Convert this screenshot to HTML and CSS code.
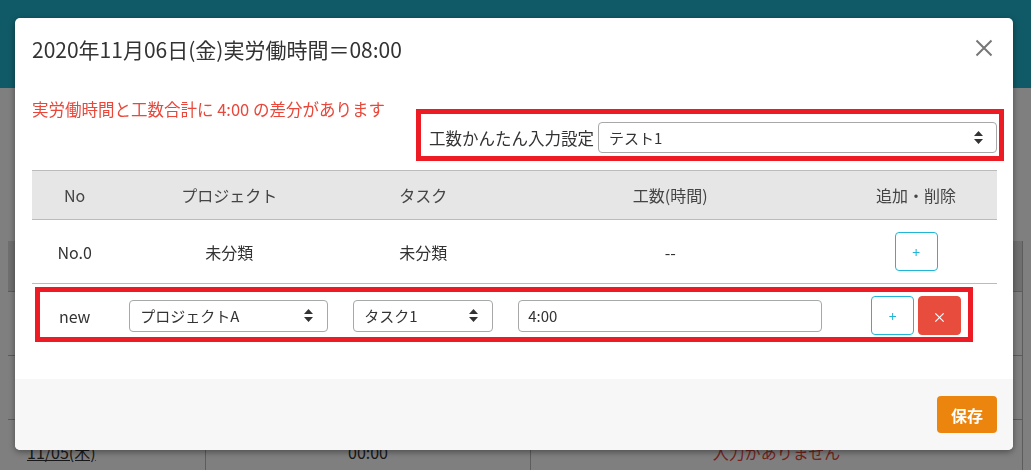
FILE: index.html
```html
<!DOCTYPE html>
<html lang="ja">
<head>
    <meta charset="UTF-8">
    <meta name="viewport" content="width=device-width, initial-scale=1.0">
    <title>工数入力</title>
    <link rel="stylesheet" href="styles.css">
</head>
<body>
    <div class="page">
        <div class="navbar"></div>
        <table class="list">
            <thead>
                <tr><th>日付</th><th>実労働時間</th><th>工数</th></tr>
            </thead>
            <tbody>
                <tr><td><a href="#">11/03(火)</a></td><td>00:00</td><td class="warn">入力がありません</td></tr>
                <tr><td><a href="#">11/04(水)</a></td><td>08:00</td><td>08:00</td></tr>
                <tr><td><a href="#">11/05(木)</a></td><td>00:00</td><td class="warn">入力がありません</td></tr>
            </tbody>
        </table>
    </div>

    <div class="backdrop"></div>

    <div class="modal">
        <div class="modal-header">
            <h4 class="modal-title">2020年11月06日(金)実労働時間＝08:00</h4>
            <button class="close" type="button">
                <svg width="18" height="18" viewBox="0 0 18 18"><path d="M1.5 1.5 L16.5 16.5 M16.5 1.5 L1.5 16.5" stroke="#777" stroke-width="2" fill="none"/></svg>
            </button>
        </div>
        <div class="modal-body">
            <div class="notice-row">
                <p class="diff-msg">実労働時間と工数合計に 4:00 の差分があります</p>
                <div class="quick-setting">
                    <label>工数かんたん入力設定</label>
                    <div class="select-wrap setting-select">
                        <select><option>テスト1</option></select>
                        <svg class="updown" width="9" height="13" viewBox="0 0 9 13"><path d="M4.5 0 L9 5 H0 Z M4.5 13 L0 8 H9 Z" fill="#333"/></svg>
                    </div>
                </div>
            </div>

            <div class="table-wrap">
                <table class="kosu">
                    <thead>
                        <tr>
                            <th class="col-no">No</th>
                            <th class="col-project">プロジェクト</th>
                            <th class="col-task">タスク</th>
                            <th class="col-time">工数(時間)</th>
                            <th class="col-action">追加・削除</th>
                        </tr>
                    </thead>
                    <tbody>
                        <tr class="row-line">
                            <td>No.0</td>
                            <td>未分類</td>
                            <td>未分類</td>
                            <td>--</td>
                            <td><button class="btn-add" type="button">+</button></td>
                        </tr>
                        <tr>
                            <td>new</td>
                            <td>
                                <div class="select-wrap project-select">
                                    <select><option>プロジェクトA</option></select>
                                    <svg class="updown" width="9" height="13" viewBox="0 0 9 13"><path d="M4.5 0 L9 5 H0 Z M4.5 13 L0 8 H9 Z" fill="#333"/></svg>
                                </div>
                            </td>
                            <td>
                                <div class="select-wrap task-select">
                                    <select><option>タスク1</option></select>
                                    <svg class="updown" width="9" height="13" viewBox="0 0 9 13"><path d="M4.5 0 L9 5 H0 Z M4.5 13 L0 8 H9 Z" fill="#333"/></svg>
                                </div>
                            </td>
                            <td><input class="time-input" type="text" value="4:00"></td>
                            <td>
                                <div class="btn-group">
                                    <button class="btn-add" type="button">+</button>
                                    <button class="btn-del" type="button">×</button>
                                </div>
                            </td>
                        </tr>
                    </tbody>
                </table>
                <div class="row-mark"></div>
            </div>
        </div>
        <div class="modal-footer">
            <button class="btn-save" type="button">保存</button>
        </div>
    </div>
</body>
</html>
```

FILE: styles.css
```css
body {
    margin: 0;
    font-family: "Noto Sans CJK JP", "Noto Sans", sans-serif;
    color: #333;
}

/* page behind the dialog */
.navbar {
    height: 88px;
    background-color: #21b5cf;
}

.list {
    margin: 153px 8px 0;
    width: 1015px;
    border-collapse: collapse;
    border-right: 1px solid #b8b8b8;
    font-size: 16px;
}

.list th {
    height: 48px;
    background-color: #dedede;
    font-weight: normal;
}

.list td {
    height: 63px;
    padding: 0 19px;
    border-top: 1px solid #b8b8b8;
    text-align: center;
}

.list td:first-child {
    width: 159px;
    text-align: left;
}

.list td:nth-child(2) {
    width: 286px;
    border-left: 1px solid #b8b8b8;
    border-right: 1px solid #b8b8b8;
}

.list a {
    color: #333;
}

.list .warn {
    color: #e8473a;
}

.backdrop {
    position: fixed;
    inset: 0;
    background-color: rgba(0, 0, 0, 0.5);
}

/* dialog */
.modal {
    position: fixed;
    left: 15px;
    top: 18px;
    width: 998px;
    height: 432px;
    background-color: #fff;
    border-radius: 5px;
    box-shadow: 0 2px 6px rgba(0, 0, 0, 0.4);
    display: flex;
    flex-direction: column;
}

.modal-header {
    display: flex;
    justify-content: space-between;
    align-items: flex-start;
    padding: 16px 20px 0 17px;
}

.modal-title {
    margin: 0;
    font-size: 21px;
    font-weight: normal;
    line-height: 31px;
    color: #333;
}

.close {
    border: none;
    background: none;
    padding: 0;
    margin-top: 5px;
    cursor: pointer;
}

.close svg {
    display: block;
}

.modal-body {
    flex: 1;
    padding: 0 16px 0 17px;
}

.notice-row {
    display: flex;
    justify-content: space-between;
    align-items: flex-start;
    margin-top: 32px;
}

.diff-msg {
    margin: 0;
    color: #e8473a;
    font-size: 16.5px;
    line-height: 24px;
}

.quick-setting {
    position: relative;
    display: flex;
    align-items: center;
    gap: 4px;
    margin-top: 25px;
    font-size: 16.5px;
}

.quick-setting::after {
    content: "";
    position: absolute;
    top: -13px;
    left: -13px;
    right: -7px;
    bottom: -8px;
    border: 5px solid #ed1c24;
}

.select-wrap {
    position: relative;
    height: 32px;
}

.select-wrap select {
    appearance: none;
    width: 100%;
    height: 100%;
    border: 1px solid #a8a8a8;
    border-radius: 4px;
    background-color: #fff;
    padding: 0 10px;
    font-family: inherit;
    font-size: 15px;
    color: #333;
}

.select-wrap .updown {
    position: absolute;
    right: 15px;
    top: 9px;
}

.setting-select {
    width: 399px;
    height: 31px;
}

.setting-select .updown {
    right: 14px;
}

.project-select {
    width: 199px;
}

.task-select {
    width: 140px;
}

.table-wrap {
    position: relative;
    margin-top: 17px;
}

.kosu {
    width: 100%;
    border-collapse: collapse;
    font-size: 16px;
}

.kosu th {
    height: 48px;
    padding: 0;
    background-color: #e6e6e6;
    border-top: 1px solid #bbb;
    border-bottom: 1px solid #bbb;
    font-weight: normal;
    color: #444;
}

.col-no { width: 86px; }
.col-project { width: 224px; }
.col-task { width: 162px; }
.col-time { width: 330px; }
.col-action { width: 163px; }

.kosu td {
    padding: 12px;
    text-align: center;
}

.row-line td {
    border-bottom: 1px solid #bbb;
}

.time-input {
    box-sizing: border-box;
    width: 304px;
    height: 32px;
    border: 1px solid #a8a8a8;
    border-radius: 4px;
    padding: 0 9px;
    font-family: inherit;
    font-size: 15px;
    color: #333;
}

.btn-group {
    display: flex;
    justify-content: center;
    gap: 4px;
}

.btn-add,
.btn-del {
    width: 43px;
    height: 39px;
    border-radius: 4px;
    font-family: inherit;
    font-size: 14px;
    padding: 0;
}

.btn-add {
    border: 1px solid #1fb6d8;
    background-color: #fff;
    color: #1fb6d8;
}

.btn-del {
    border: 1px solid #e74c3c;
    background-color: #e74c3c;
    color: #fff;
}

.row-mark {
    position: absolute;
    left: 3px;
    top: 117px;
    width: 938px;
    height: 55px;
    box-sizing: border-box;
    border: 5px solid #ed1c24;
}

.modal-footer {
    display: flex;
    justify-content: flex-end;
    padding: 17px 16px;
    background-color: #f7f7f7;
    border-radius: 0 0 5px 5px;
}

.btn-save {
    width: 60px;
    height: 37px;
    border: none;
    border-radius: 4px;
    background-color: #ec850e;
    color: #fff;
    font-family: inherit;
    font-size: 16px;
    font-weight: bold;
}
```
